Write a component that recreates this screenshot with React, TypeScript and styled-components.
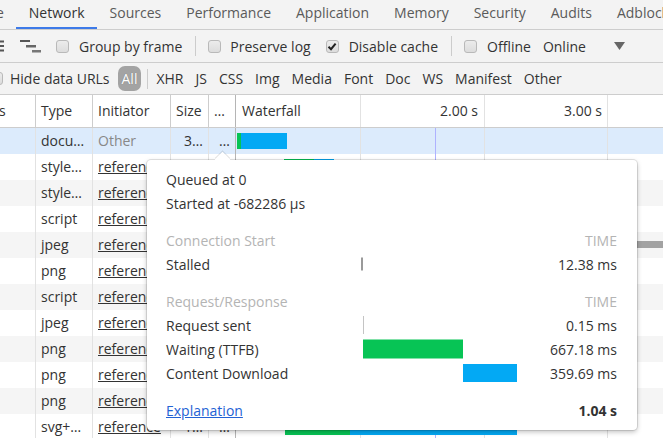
import React from 'react';
import styled, { createGlobalStyle } from 'styled-components';

const GlobalStyle = createGlobalStyle`
  html, body { margin: 0; padding: 0; background: #fff; }
  body {
    font-family: "Open Sans", "Noto Sans", sans-serif;
    font-size: 14px;
    color: #333;
    overflow: hidden;
  }
  * { box-sizing: border-box; }
`;

const Page = styled.div`
  position: relative;
  width: 663px;
  height: 438px;
  overflow: hidden;
  background: #fff;
`;

/* ---------- Tab bar ---------- */
const TabBar = styled.div`
  display: flex;
  height: 30px;
  background: #f3f3f3;
  border-bottom: 1px solid #cdcdcd;
  white-space: nowrap;
`;

const Tab = styled.div<{ $active?: boolean; $offset?: number }>`
  flex: none;
  height: 29px;
  padding: 0 12.5px;
  margin-left: ${p => p.$offset ?? 0}px;
  line-height: 26px;
  color: ${p => (p.$active ? '#333' : '#5a5a5a')};
  border-bottom: 2px solid ${p => (p.$active ? '#3d7ae8' : 'transparent')};
`;

/* ---------- Tool bars ---------- */
const Toolbar = styled.div<{ $h: number }>`
  display: flex;
  align-items: center;
  height: ${p => p.$h}px;
  background: #f3f3f3;
  border-bottom: 1px solid #cdcdcd;
  white-space: nowrap;
`;

const Spaced = styled.div<{ $ml?: number }>`
  flex: none;
  display: flex;
  align-items: center;
  margin-left: ${p => p.$ml ?? 0}px;
`;

const Box = styled.span<{ $ml?: number }>`
  flex: none;
  display: flex;
  align-items: center;
  justify-content: center;
  width: 13px;
  height: 13px;
  margin-left: ${p => p.$ml ?? 0}px;
  border: 1px solid #b9b9b9;
  border-radius: 3px;
  background: linear-gradient(#ececec, #dcdcdc);
`;

const ToolLabel = styled.span<{ $ml?: number }>`
  flex: none;
  margin-left: ${p => p.$ml ?? 0}px;
  color: #333;
`;

const Sep = styled.span<{ $ml?: number }>`
  flex: none;
  width: 1px;
  height: 20px;
  margin-left: ${p => p.$ml ?? 0}px;
  background: #ccc;
`;

const Pill = styled.span<{ $ml?: number }>`
  flex: none;
  height: 25px;
  line-height: 25px;
  padding: 0 4px;
  margin-left: ${p => p.$ml ?? 0}px;
  border-radius: 7px;
  background: #a3a3a3;
  color: #fff;
  text-shadow: 0 0 1px rgba(0, 0, 0, 0.3);
`;

const FilterItem = styled.span`
  flex: none;
  padding: 0 6px;
  color: #333;
`;

const Check: React.FC<{ ml?: number; checked?: boolean }> = ({ ml, checked }) => (
  <Box $ml={ml}>
    {checked && (
      <svg width="10" height="9" viewBox="0 0 10 9">
        <path d="M1.5 4.8 L4 7.2 L8.6 1.6" fill="none" stroke="#222" strokeWidth="2" />
      </svg>
    )}
  </Box>
);

/* ---------- Table ---------- */
const Table = styled.div`
  margin-left: -40px;
  width: 703px;
`;

const COLS = '76px 57px 78px 38px 27px 1fr';

const HeaderRow = styled.div`
  display: grid;
  grid-template-columns: ${COLS};
  height: 33px;
  border-bottom: 1px solid #cdcdcd;
  background: #fff;
`;

const Row = styled.div<{ $bg: string }>`
  display: grid;
  grid-template-columns: ${COLS};
  height: 26px;
  background: ${p => p.$bg};
`;

const Cell = styled.div<{ $align?: 'left' | 'right'; $muted?: boolean; $link?: boolean; $head?: boolean; $strong?: boolean }>`
  padding: 0 5px;
  line-height: ${p => (p.$head ? 32 : 26)}px;
  overflow: hidden;
  white-space: nowrap;
  text-align: ${p => p.$align ?? 'left'};
  color: ${p => (p.$muted ? '#888' : '#333')};
  text-decoration: ${p => (p.$link ? 'underline' : 'none')};
  border-right: 1px solid ${p => (p.$strong ? '#b5b5b5' : p.$head ? '#cdcdcd' : '#e2e2e2')};
`;

const gridLines = (withDcl: boolean) => `
  background-image:
    ${withDcl ? 'linear-gradient(#aeb2ff, #aeb2ff),' : ''}
    linear-gradient(#e2e2e2, #e2e2e2),
    linear-gradient(#e2e2e2, #e2e2e2),
    linear-gradient(#e2e2e2, #e2e2e2);
  background-size: 1px 100%;
  background-repeat: no-repeat;
  background-position: ${withDcl ? '199px 0,' : ''} 124px 0, 248px 0, 371px 0;
`;

const WaterfallHead = styled.div`
  position: relative;
  padding-left: 6px;
  line-height: 32px;
  white-space: nowrap;
  ${gridLines(false)}
`;

const TimeLabel = styled.span`
  position: absolute;
  top: 0;
  transform: translateX(-100%);
  line-height: 32px;
  color: #333;
`;

const WaterfallCell = styled.div`
  position: relative;
  ${gridLines(true)}
`;

const Bar = styled.span<{ $color: string; $top: number; $h: number }>`
  position: absolute;
  top: ${p => p.$top}px;
  height: ${p => p.$h}px;
  background: ${p => p.$color};
`;

/* ---------- Popover ---------- */
const Popover = styled.div`
  position: absolute;
  left: 147px;
  top: 160px;
  width: 490px;
  height: 270px;
  padding: 7px 20px 7px 19px;
  background: #fff;
  border-radius: 4px;
  box-shadow: 0 0 0 1px rgba(0, 0, 0, 0.1), 0 2px 5px rgba(0, 0, 0, 0.25);

  &::before {
    content: '';
    position: absolute;
    left: 70px;
    top: -6px;
    width: 11px;
    height: 11px;
    background: #fff;
    transform: rotate(45deg);
    box-shadow: -1px -1px 0 rgba(0, 0, 0, 0.1);
  }
`;

const TimingGrid = styled.div<{ $mt?: number }>`
  position: relative;
  display: grid;
  grid-template-columns: 195px 170px 1fr;
  grid-auto-rows: 24px;
  align-items: center;
  margin-top: ${p => p.$mt ?? 0}px;
`;

const TLabel = styled.div<{ $span?: number; $muted?: boolean }>`
  grid-column: span ${p => p.$span ?? 1};
  white-space: nowrap;
  color: ${p => (p.$muted ? '#b4b4b4' : '#333')};
`;

const TValue = styled.div<{ $muted?: boolean; $bold?: boolean }>`
  text-align: right;
  white-space: nowrap;
  color: ${p => (p.$muted ? '#b4b4b4' : '#333')};
  font-weight: ${p => (p.$bold ? 700 : 400)};
`;

const Track = styled.div`
  position: relative;
  height: 24px;
`;

const TBar = styled.span<{ $color: string; $h: number }>`
  position: absolute;
  top: 50%;
  height: ${p => p.$h}px;
  transform: translateY(-50%);
  background: ${p => p.$color};
`;

const Footer = styled.div`
  display: flex;
  justify-content: space-between;
  align-items: center;
  height: 24px;
  margin-top: 13px;
`;

const Link = styled.a`
  color: #2362d4;
  text-decoration: underline;
  cursor: pointer;
`;

const Total = styled.span`
  font-weight: 700;
  color: #333;
`;

/* ---------- Data ---------- */
type Seg = { left: number; width: number; color: string; top?: number; h?: number };
type Req = { type: string; initiator: string; link: boolean; size: string; bars: Seg[] };

const GREEN = '#07c455';
const BLUE = '#03a9f4';

const requests: Req[] = [
  { type: 'docu…', initiator: 'Other', link: false, size: '3…', bars: [{ left: 1, width: 4, color: GREEN }, { left: 5, width: 46, color: BLUE }] },
  { type: 'style…', initiator: 'reference', link: true, size: '1…', bars: [{ left: 48, width: 30, color: GREEN }, { left: 78, width: 20, color: BLUE }] },
  { type: 'style…', initiator: 'reference', link: true, size: '1…', bars: [] },
  { type: 'script', initiator: 'reference', link: true, size: '1…', bars: [] },
  { type: 'jpeg', initiator: 'reference', link: true, size: '1…', bars: [{ left: 401, width: 40, color: '#a2a2a2', top: 9, h: 7 }] },
  { type: 'png', initiator: 'reference', link: true, size: '1…', bars: [] },
  { type: 'script', initiator: 'reference', link: true, size: '1…', bars: [] },
  { type: 'jpeg', initiator: 'reference', link: true, size: '1…', bars: [] },
  { type: 'png', initiator: 'reference', link: true, size: '1…', bars: [] },
  { type: 'png', initiator: 'reference', link: true, size: '1…', bars: [] },
  { type: 'png', initiator: 'reference', link: true, size: '1…', bars: [] },
  { type: 'svg+…', initiator: 'reference', link: true, size: '1…', bars: [{ left: 49, width: 65, color: GREEN }, { left: 114, width: 167, color: BLUE }] },
];

const tabs = ['Console', 'Network', 'Sources', 'Performance', 'Application', 'Memory', 'Security', 'Audits', 'Adblock Plus'];
const filters = ['XHR', 'JS', 'CSS', 'Img', 'Media', 'Font', 'Doc', 'WS', 'Manifest', 'Other'];

const rowBg = (i: number) => (i === 0 ? '#dcebfc' : i % 2 === 1 ? '#fff' : '#f5f5f5');

const ListIcon = () => (
  <svg width="12" height="12" viewBox="0 0 12 12">
    <rect x="0" y="0.5" width="12" height="2" fill="#555" />
    <rect x="0" y="5" width="12" height="2" fill="#555" />
    <rect x="0" y="9.5" width="12" height="2" fill="#555" />
  </svg>
);

const WaterfallIcon = () => (
  <svg width="21" height="14" viewBox="0 0 21 14">
    <rect x="0" y="1" width="10" height="2" fill="#555" />
    <rect x="6" y="6" width="10" height="2.5" fill="#666" />
    <rect x="12" y="11" width="9" height="2.5" fill="#777" />
  </svg>
);

export default function App() {
  return (
    <Page>
      <GlobalStyle />
      <TabBar>
        {tabs.map((t, i) => (
          <Tab key={t} $active={t === 'Network'} $offset={i === 0 ? -61 : 0}>
            {t}
          </Tab>
        ))}
      </TabBar>

      <Toolbar $h={33}>
        <Spaced $ml={-8}><ListIcon /></Spaced>
        <Spaced $ml={16}><WaterfallIcon /></Spaced>
        <Check ml={15} />
        <ToolLabel $ml={10}>Group by frame</ToolLabel>
        <Sep $ml={13} />
        <Check ml={12} />
        <ToolLabel $ml={9}>Preserve log</ToolLabel>
        <Check ml={15} checked />
        <ToolLabel $ml={10}>Disable cache</ToolLabel>
        <Sep $ml={13} />
        <Check ml={12} />
        <ToolLabel $ml={10}>Offline</ToolLabel>
        <ToolLabel $ml={12}>Online</ToolLabel>
        <Spaced $ml={28}>
          <svg width="11" height="8" viewBox="0 0 11 8">
            <path d="M0 0 H11 L5.5 8 Z" fill="#666" />
          </svg>
        </Spaced>
      </Toolbar>

      <Toolbar $h={32}>
        <Check ml={-10} />
        <ToolLabel $ml={7}>Hide data URLs</ToolLabel>
        <Pill $ml={8}>All</Pill>
        <Sep $ml={6} />
        <Spaced $ml={2}>
          {filters.map(f => (
            <FilterItem key={f}>{f}</FilterItem>
          ))}
        </Spaced>
      </Toolbar>

      <Table>
        <HeaderRow>
          <Cell $head>Status</Cell>
          <Cell $head>Type</Cell>
          <Cell $head>Initiator</Cell>
          <Cell $head>Size</Cell>
          <Cell $head $strong>…</Cell>
          <WaterfallHead>
            Waterfall
            <TimeLabel style={{ left: 242 }}>2.00 s</TimeLabel>
            <TimeLabel style={{ left: 366 }}>3.00 s</TimeLabel>
          </WaterfallHead>
        </HeaderRow>
        {requests.map((r, i) => (
          <Row key={i} $bg={rowBg(i)}>
            <Cell>200</Cell>
            <Cell>{r.type}</Cell>
            <Cell $muted={!r.link} $link={r.link}>{r.initiator}</Cell>
            <Cell $align="right">{r.size}</Cell>
            <Cell $align="right" $strong>…</Cell>
            <WaterfallCell>
              {r.bars.map((b, j) => (
                <Bar key={j} $color={b.color} $top={b.top ?? 5} $h={b.h ?? 16} style={{ left: b.left, width: b.width }} />
              ))}
            </WaterfallCell>
          </Row>
        ))}
      </Table>

      <Popover>
        <TimingGrid>
          <TLabel $span={3}>Queued at 0</TLabel>
          <TLabel $span={3}>Started at -682286 µs</TLabel>
        </TimingGrid>
        <TimingGrid $mt={13}>
          <TLabel $span={2} $muted>Connection Start</TLabel>
          <TValue $muted>TIME</TValue>
          <TLabel>Stalled</TLabel>
          <Track><TBar $color="#9a9a9a" $h={13} style={{ left: 0, width: 2 }} /></Track>
          <TValue>12.38 ms</TValue>
        </TimingGrid>
        <TimingGrid $mt={13}>
          <TLabel $span={2} $muted>Request/Response</TLabel>
          <TValue $muted>TIME</TValue>
          <TLabel>Request sent</TLabel>
          <Track><TBar $color="#c4c4c4" $h={18} style={{ left: 2, width: 1 }} /></Track>
          <TValue>0.15 ms</TValue>
          <TLabel>Waiting (TTFB)</TLabel>
          <Track><TBar $color={GREEN} $h={19} style={{ left: 2, width: 100 }} /></Track>
          <TValue>667.18 ms</TValue>
          <TLabel>Content Download</TLabel>
          <Track><TBar $color={BLUE} $h={18} style={{ left: 102, width: 54 }} /></Track>
          <TValue>359.69 ms</TValue>
        </TimingGrid>
        <Footer>
          <Link>Explanation</Link>
          <Total>1.04 s</Total>
        </Footer>
      </Popover>
    </Page>
  );
}
